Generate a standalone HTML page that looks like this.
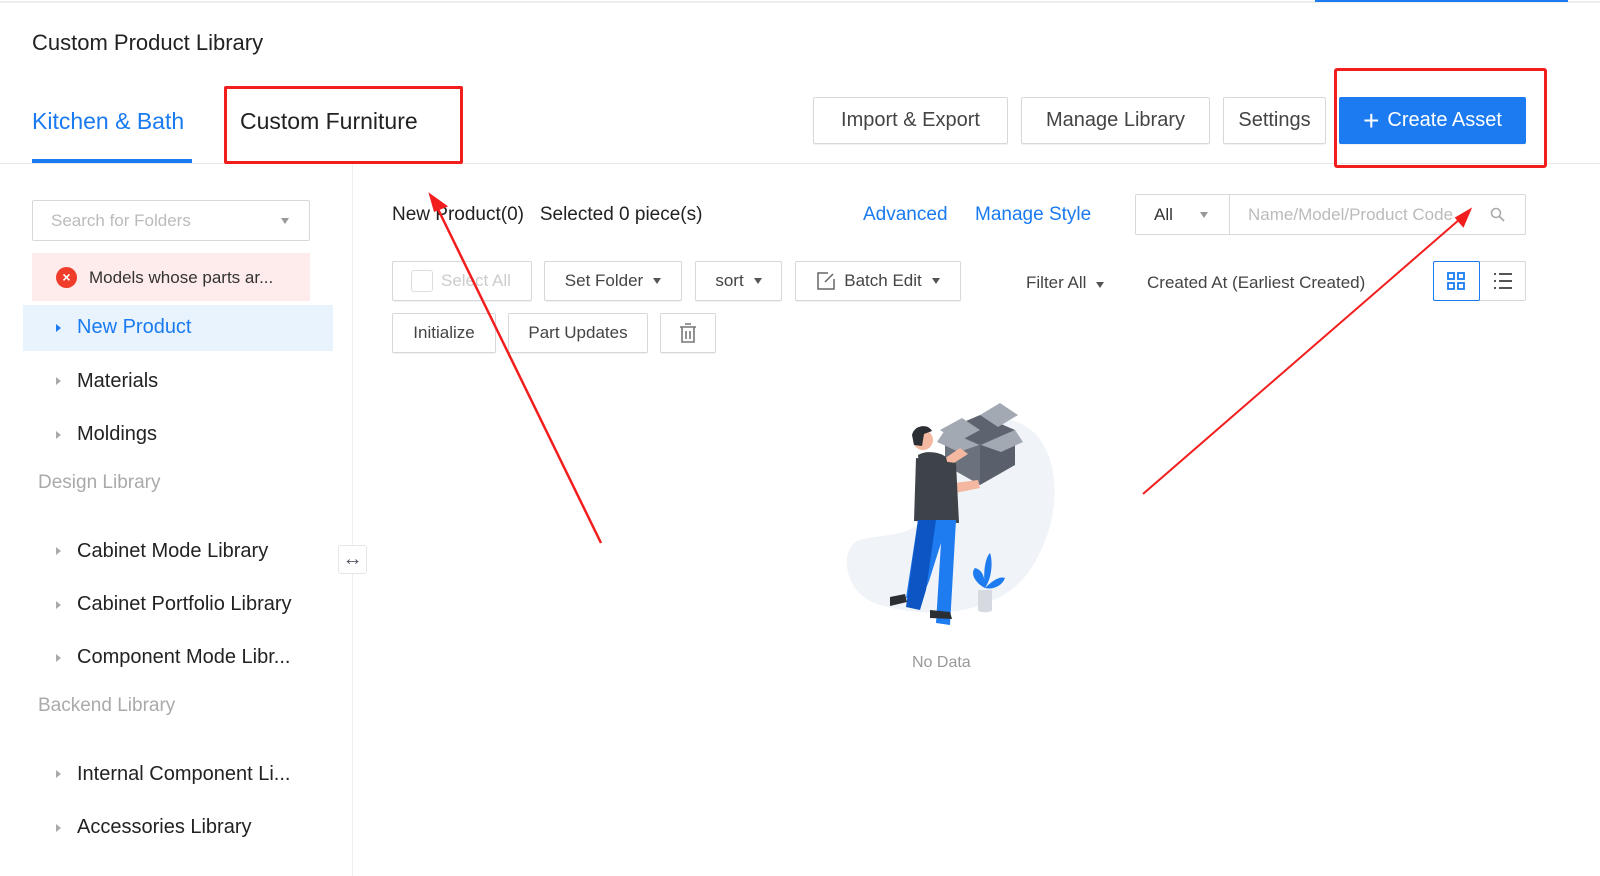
<!DOCTYPE html>
<html><head><meta charset="utf-8"><style>
*{box-sizing:border-box;margin:0;padding:0}
body{width:1600px;height:876px;background:#fff;font-family:"Liberation Sans",sans-serif;color:#333;position:relative;overflow:hidden}
.a{position:absolute;white-space:nowrap}
.btn{position:absolute;border:1px solid #d6d8dc;border-radius:2px;background:#fff;display:flex;align-items:center;justify-content:center;color:#444;box-shadow:0 1px 1px rgba(0,0,0,.06)}
.tri{display:inline-block;width:0;height:0;border-left:4px solid transparent;border-right:4px solid transparent;border-top:6px solid #555;margin-left:10px}
.item{position:absolute;left:77px;font-size:20px;color:#222}
.car{position:absolute;left:56px;width:0;height:0;border-top:4px solid transparent;border-bottom:4px solid transparent;border-left:5px solid #aaa}
.grp{position:absolute;left:38px;font-size:19px;color:#aaa}
</style></head><body>
<div class="a" style="left:0;top:1px;width:1600px;height:2px;background:#eee"></div>
<div class="a" style="left:1315px;top:0;width:253px;height:2px;background:#1c7bf0"></div>
<div class="a" style="left:32px;top:30px;font-size:22px;color:#222">Custom Product Library</div>
<div class="a" style="left:32px;top:108px;font-size:23px;color:#1a7bf0">Kitchen &amp; Bath</div>
<div class="a" style="left:32px;top:159px;width:160px;height:4px;background:#1a7bf0"></div>
<div class="a" style="left:240px;top:108px;font-size:23px;color:#222">Custom Furniture</div>
<div class="a" style="left:0;top:163px;width:1600px;height:1px;background:#e8e8e8"></div>
<div class="btn" style="left:813px;top:97px;width:195px;height:47px;font-size:20px">Import &amp; Export</div>
<div class="btn" style="left:1021px;top:97px;width:189px;height:47px;font-size:20px">Manage Library</div>
<div class="btn" style="left:1223px;top:97px;width:103px;height:47px;font-size:20px">Settings</div>
<div class="btn" style="left:1339px;top:97px;width:187px;height:47px;font-size:20px;background:#1c7bf0;border-color:#1c7bf0;color:#fff"><span style="font-size:28px;margin-right:8px;line-height:1">+</span>Create Asset</div>
<!-- sidebar -->
<div class="a" style="left:352px;top:164px;width:1px;height:712px;background:#eee"></div>
<div class="a" style="left:32px;top:200px;width:278px;height:41px;border:1px solid #d6d8dc;border-radius:2px"></div>
<div class="a" style="left:51px;top:211px;font-size:17px;color:#bbb">Search for Folders</div>
<div class="a" style="left:281px;top:218px;border-left:4px solid transparent;border-right:4px solid transparent;border-top:6px solid #999"></div>
<div class="a" style="left:32px;top:253px;width:278px;height:48px;background:#fdeceb"></div>
<div class="a" style="left:56px;top:267px;width:21px;height:21px;border-radius:50%;background:#f03c2a;color:#fff;font-size:14px;text-align:center;line-height:21px;font-weight:bold">×</div>
<div class="a" style="left:89px;top:268px;font-size:17px;color:#333">Models whose parts ar...</div>
<div class="a" style="left:23px;top:305px;width:310px;height:46px;background:#e9f3fe"></div>
<div class="car" style="top:324px;border-left-color:#1a7bf0"></div>
<div class="item" style="top:316px;color:#1a7bf0">New Product</div>
<div class="car" style="top:377px"></div><div class="item" style="top:370px">Materials</div>
<div class="car" style="top:431px"></div><div class="item" style="top:423px">Moldings</div>
<div class="grp" style="top:472px">Design Library</div>
<div class="car" style="top:547px"></div><div class="item" style="top:540px">Cabinet Mode Library</div>
<div class="car" style="top:601px"></div><div class="item" style="top:593px">Cabinet Portfolio Library</div>
<div class="car" style="top:654px"></div><div class="item" style="top:646px">Component Mode Libr...</div>
<div class="grp" style="top:695px">Backend Library</div>
<div class="car" style="top:770px"></div><div class="item" style="top:763px">Internal Component Li...</div>
<div class="car" style="top:824px"></div><div class="item" style="top:816px">Accessories Library</div>
<div class="a" style="left:338px;top:545px;width:29px;height:29px;border:1px solid #e4e6ea;border-radius:3px;background:#fff;text-align:center;line-height:26px;font-size:20px;color:#556">↔</div>
<!-- main -->
<div class="a" style="left:392px;top:204px;font-size:19px;color:#222">New Product(0)&nbsp;&nbsp; Selected 0 piece(s)</div>
<div class="a" style="left:863px;top:204px;font-size:19px;color:#1a7bf0">Advanced</div>
<div class="a" style="left:975px;top:204px;font-size:19px;color:#1a7bf0">Manage Style</div>
<div class="a" style="left:1135px;top:194px;width:391px;height:41px;border:1px solid #d6d8dc;border-radius:2px"></div>
<div class="a" style="left:1229px;top:195px;width:1px;height:39px;background:#d6d8dc"></div>
<div class="a" style="left:1154px;top:205px;font-size:17px;color:#333">All</div>
<div class="a" style="left:1200px;top:212px;border-left:4px solid transparent;border-right:4px solid transparent;border-top:6px solid #999"></div>
<div class="a" style="left:1248px;top:205px;font-size:17px;color:#bbb">Name/Model/Product Code</div>
<svg class="a" style="left:1490px;top:207px" width="16" height="16"><circle cx="6" cy="6" r="4.5" fill="none" stroke="#aaa" stroke-width="1.6"/><path d="M9.5 9.5L14 14" stroke="#aaa" stroke-width="1.8"/></svg>
<div class="btn" style="left:392px;top:261px;width:140px;height:40px;font-size:17px;color:#ccc;justify-content:flex-start;padding-left:18px"><span style="display:inline-block;width:22px;height:22px;border:1px solid #ddd;border-radius:3px;margin-right:8px"></span>Select All</div>
<div class="btn" style="left:544px;top:261px;width:138px;height:40px;font-size:17px">Set Folder<span class="tri"></span></div>
<div class="btn" style="left:695px;top:261px;width:87px;height:40px;font-size:17px">sort<span class="tri"></span></div>
<div class="btn" style="left:795px;top:261px;width:166px;height:40px;font-size:17px"><svg width="20" height="20" style="margin-right:8px"><path d="M12 2H2v16h16V8" fill="none" stroke="#666" stroke-width="1.5"/><path d="M9 11L17 3" stroke="#666" stroke-width="1.5"/></svg>Batch Edit<span class="tri"></span></div>
<div class="a" style="left:1026px;top:273px;font-size:17px;color:#444">Filter All<span class="tri"></span></div>
<div class="a" style="left:1147px;top:273px;font-size:17px;color:#444">Created At (Earliest Created)</div>
<div class="a" style="left:1433px;top:261px;width:93px;height:40px;border:1px solid #d6d8dc;border-radius:2px"></div>
<div class="a" style="left:1433px;top:261px;width:47px;height:40px;border:1px solid #1a7bf0;border-radius:2px"></div>
<svg class="a" style="left:1447px;top:272px" width="18" height="18"><g fill="none" stroke="#1a7bf0" stroke-width="1.8"><rect x="1" y="1" width="6" height="6"/><rect x="11" y="1" width="6" height="6"/><rect x="1" y="11" width="6" height="6"/><rect x="11" y="11" width="6" height="6"/></g></svg>
<svg class="a" style="left:1493px;top:272px" width="20" height="18"><g stroke="#555" stroke-width="2"><path d="M1 2h2M6 2h13M1 9h2M6 9h13M1 16h2M6 16h13"/></g></svg>
<div class="btn" style="left:392px;top:313px;width:104px;height:40px;font-size:17px">Initialize</div>
<div class="btn" style="left:508px;top:313px;width:140px;height:40px;font-size:17px">Part Updates</div>
<div class="btn" style="left:660px;top:313px;width:56px;height:40px"><svg width="18" height="20"><g fill="none" stroke="#777" stroke-width="1.6"><path d="M1 4h16M6 1h6M3 4v15h12V4M7 8v8M11 8v8"/></g></svg></div>
<!-- illustration -->
<svg class="a" style="left:820px;top:390px" width="260" height="240" viewBox="0 0 260 240">
<path d="M190 30c50 10 60 90 20 150-30 45-100 50-150 35-40-12-40-60-20-65 30-8 60 0 75-40 15-45 40-85 75-80z" fill="#f0f3f7"/>
<path d="M125 40l35-15 35 15-35 15z" fill="#5d6470"/>
<path d="M125 40v35l35 20V55z" fill="#6b727d"/>
<path d="M195 40v35l-35 20V55z" fill="#5a606b"/>
<path d="M120 40l22-12 18 12-22 12z" fill="#a3a9b2"/><path d="M160 25l20-12 18 12-20 12z" fill="#a3a9b2"/>
<path d="M125 40l-8 12 22 10 20-7z" fill="#a3a9b2"/><path d="M195 40l8 12-22 10-20-7z" fill="#a3a9b2"/>
<path d="M118 73l22-15 8 6-25 16z" fill="#f4b8a0"/>
<path d="M118 95l40-5 2 8-40 8z" fill="#f4b8a0"/>
<path d="M98 65c8-5 22-3 28 2l10 45-34 5z" fill="#3e4249"/>
<path d="M96 68l-2 63 45 2-3-60z" fill="#3e4249"/>
<circle cx="103" cy="50" r="10" fill="#f4b8a0"/><path d="M92 45c2-10 16-12 20-4l-8 3-2 12-8-1z" fill="#2b2e33"/>
<path d="M98 130h38l-6 105-14-2 5-80-12 38-8 20-15-3z" fill="#1e7bf0"/>
<path d="M98 130h18l-10 70-6 20-14-3z" fill="#0d55c2"/>
<path d="M70 207l15-3 2 8-17 4z" fill="#2b2e33"/><path d="M110 220l20 2 2 7-22-1z" fill="#2b2e33"/>
<path d="M158 200h14v20c0 3-14 3-14 0z" fill="#d6d9df"/>
<path d="M165 198c-10-5-15-15-10-20 8 2 10 10 10 20zM165 198c-2-15 0-30 5-35 3 8 2 25-5 35zM165 198c8-8 15-12 20-10-3 8-12 12-20 10z" fill="#1e7bf0"/>
</svg>
<div class="a" style="left:912px;top:654px;font-size:16px;color:#999">No Data</div>
<!-- annotations -->
<div class="a" style="left:224px;top:86px;width:239px;height:78px;border:3px solid #f21e1e;border-radius:2px"></div>
<div class="a" style="left:1334px;top:68px;width:213px;height:100px;border:3px solid #f21e1e;border-radius:3px"></div>
<svg class="a" style="left:0;top:0" width="1600" height="876">
<path d="M601 543L436 205" stroke="#f21e1e" stroke-width="2.5"/><path d="M431 196l14 10-10 4z" fill="#f21e1e" stroke="#f21e1e" stroke-width="3"/>
<path d="M1143 494L1460 219" stroke="#f21e1e" stroke-width="2"/><path d="M1469 211l-6 14-6-7z" fill="#f21e1e" stroke="#f21e1e" stroke-width="3"/>
</svg>
</body></html>
